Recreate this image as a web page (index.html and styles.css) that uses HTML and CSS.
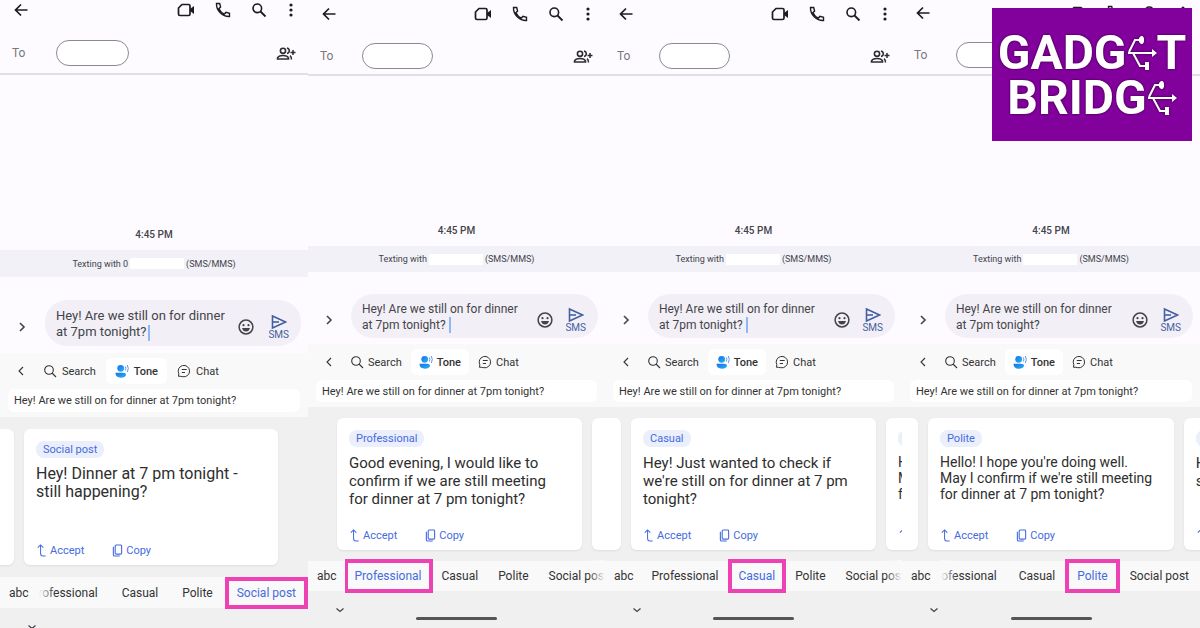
FILE: index.html
```html
<!DOCTYPE html>
<html lang="en">
<head>
    <meta charset="UTF-8">
    <title>Message tone suggestions - Gadget Bridge</title>
    <link rel="stylesheet" href="styles.css">
</head>
<body>
    <svg class="sprite" aria-hidden="true">
        <defs>
            <linearGradient id="toneFill" x1="0" y1="0" x2="1" y2="1">
                <stop offset="0" stop-color="#1a6fe8"/>
                <stop offset="1" stop-color="#27b3f5"/>
            </linearGradient>
        </defs>
        <symbol id="i-back" viewBox="0 0 16 16"><path d="M14.500 8H3M8 2.500L2.500 8L8 13.500" fill="none" stroke="currentColor" stroke-width="1.700"/></symbol>
        <symbol id="i-video" viewBox="0 0 18 16"><path d="M5 2.500H11.500Q13 2.500 13 4V12Q13 13.500 11.500 13.500H3Q1.500 13.500 1.500 12V6Z" fill="none" stroke="currentColor" stroke-width="1.700"/><path d="M13 7L17 4V12L13 9Z" fill="currentColor"/></symbol>
        <symbol id="i-phone" viewBox="0 0 16 16"><path d="M1.500 1.500H4.700L5.600 5L3.900 6.700Q5.800 10.400 9.300 12.100L11 10.400L14.500 11.300V14.500Q9.500 14.800 5.200 10.800Q1.200 6.500 1.500 1.500Z" fill="none" stroke="currentColor" stroke-width="1.400"/></symbol>
        <symbol id="i-search" viewBox="0 0 16 16"><circle cx="6.300" cy="6.300" r="4.300" fill="none" stroke="currentColor" stroke-width="1.600"/><path d="M9.500 9.500L14.500 14.500" stroke="currentColor" stroke-width="1.800"/></symbol>
        <symbol id="i-dots" viewBox="0 0 8 16"><circle cx="4" cy="3" r="1.600"/><circle cx="4" cy="8" r="1.600"/><circle cx="4" cy="13" r="1.600"/></symbol>
        <symbol id="i-group" viewBox="0 0 20 16"><circle cx="7" cy="4.800" r="2.600" fill="none" stroke="currentColor" stroke-width="1.600"/><path d="M1.500 13V12Q2.500 9.500 7 9.500T12.500 12V13Z" fill="none" stroke="currentColor" stroke-width="1.600"/><path d="M11 2Q13.300 2.600 13.300 4.800T11 7.600M14 9.700Q15.500 10.800 15.500 13.500M17 4V9M14.500 6.500H19.500" fill="none" stroke="currentColor" stroke-width="1.500"/></symbol>
        <symbol id="i-right" viewBox="0 0 10 10"><path d="M3 1L7 5L3 9" fill="none" stroke="currentColor" stroke-width="1.600"/></symbol>
        <symbol id="i-left" viewBox="0 0 10 10"><path d="M7 1L3 5L7 9" fill="none" stroke="currentColor" stroke-width="1.100"/></symbol>
        <symbol id="i-down" viewBox="0 0 10 10"><path d="M1.500 3.500L5 6.500L8.500 3.500" fill="none" stroke="currentColor" stroke-width="1.300"/></symbol>
        <symbol id="i-smile" viewBox="0 0 16 16"><circle cx="8" cy="8" r="6.900" fill="none" stroke="currentColor" stroke-width="1.500"/><circle cx="5.500" cy="6.200" r="1.100"/><circle cx="10.500" cy="6.200" r="1.100"/><path d="M4 9H12Q11 12.500 8 12.500T4 9Z"/></symbol>
        <symbol id="i-send" viewBox="0 0 16 16"><path d="M1.500 2L14.500 8L1.500 14Z" fill="none" stroke="currentColor" stroke-width="1.600"/><path d="M2 8H8" stroke="currentColor" stroke-width="1.600"/></symbol>
        <symbol id="i-find" viewBox="0 0 14 14"><circle cx="6" cy="6" r="4.300" fill="none" stroke="currentColor" stroke-width="1.100"/><path d="M9 9L13 13" stroke="currentColor" stroke-width="1.100"/></symbol>
        <symbol id="i-tone" viewBox="0 0 14 14"><circle cx="5.700" cy="4.300" r="3.400" fill="url(#toneFill)"/><path d="M0.500 8.800H8Q11 8.800 11 11Q10 13.700 6 13.700Q0.500 13.700 0.500 8.800Z" fill="url(#toneFill)"/><path d="M10.300 2.500Q11.500 4.500 10.300 6.500M12.300 1Q14.300 4.500 12.300 8" fill="none" stroke="#5f93f0"/></symbol>
        <symbol id="i-chat" viewBox="0 0 14 14"><path d="M3.500 12.300H1.500L1.800 9.700A5.700 5.700 0 1 1 5.800 12.700Z" fill="none" stroke="currentColor" stroke-width="1"/><path d="M4.800 5.500H9.700M4.800 8.500H8" stroke="currentColor"/></symbol>
        <symbol id="i-accept" viewBox="0 0 10 14"><path d="M1 4L4 1L7 4M4 1V10Q4 13 6.500 13H9.500" fill="none" stroke="currentColor" stroke-width="1.100"/></symbol>
        <symbol id="i-copy" viewBox="0 0 12 14"><rect x="3.500" y="1" width="7" height="10" rx="1" fill="none" stroke="currentColor" stroke-width="1.200"/><path d="M1.500 3V11.500Q1.500 13 3 13H8.500" fill="none" stroke="currentColor" stroke-width="1.200"/></symbol>
        <symbol id="i-usb" viewBox="0 0 30 36"><path d="M1 18H26M2 17L8 5H13M6 18L13 31H18" fill="none" stroke="currentColor" stroke-width="2"/><path d="M25 14L30 18L25 22Z"/><path d="M12 3L14 1H15.500L17 3V7L15.500 9H14L12 7Z"/><rect x="18" y="27" width="4" height="8"/></symbol>
    </svg>

    <main class="shots">
        <section class="phone phone-large">
            <header class="topbar">
                <button class="icon-btn" aria-label="Back"><svg><use href="#i-back"/></svg></button>
                <div class="topbar-actions">
                    <button class="icon-btn wide" aria-label="Video call"><svg><use href="#i-video"/></svg></button>
                    <button class="icon-btn" aria-label="Call"><svg><use href="#i-phone"/></svg></button>
                    <button class="icon-btn" aria-label="Search"><svg><use href="#i-search"/></svg></button>
                    <button class="icon-btn slim" aria-label="More"><svg><use href="#i-dots"/></svg></button>
                </div>
            </header>
            <div class="to-row">
                <label for="to1">To</label>
                <input class="recipient" id="to1" type="text">
                <button class="icon-btn group" aria-label="Add people"><svg><use href="#i-group"/></svg></button>
            </div>
            <div class="thread"><time>4:45 PM</time></div>
            <p class="texting">Texting with 0<span class="redacted"></span>(SMS/MMS)</p>
            <div class="compose">
                <button class="expand" aria-label="Expand"><svg><use href="#i-right"/></svg></button>
                <div class="bubble">
                    <textarea rows="2" aria-label="Message">Hey! Are we still on for dinner at 7pm tonight?</textarea>
                    <span class="caret"></span>
                    <button class="icon-btn smile" aria-label="Emoji"><svg><use href="#i-smile"/></svg></button>
                    <button class="send"><svg><use href="#i-send"/></svg>SMS</button>
                </div>
            </div>
            <div class="keyboard">
                <nav class="tools">
                    <button class="collapse" aria-label="Back"><svg><use href="#i-left"/></svg></button>
                    <button class="tool"><svg><use href="#i-find"/></svg>Search</button>
                    <button class="tool selected"><svg><use href="#i-tone"/></svg>Tone</button>
                    <button class="tool"><svg><use href="#i-chat"/></svg>Chat</button>
                </nav>
                <input class="source" type="text" aria-label="Text to rewrite" value="Hey! Are we still on for dinner at 7pm tonight?">
            </div>
            <div class="cards">
                <article class="card previous"></article>
                <article class="card">
                    <span class="tag">Social post</span>
                    <p>Hey! Dinner at 7 pm tonight - still happening?</p>
                    <div class="card-actions">
                        <button><svg><use href="#i-accept"/></svg>Accept</button>
                        <button><svg><use href="#i-copy"/></svg>Copy</button>
                    </div>
                </article>
            </div>
            <div class="tones">
                <button class="abc">abc</button>
                <div class="tone-list scrolled">
                    <button>Professional</button>
                    <button>Casual</button>
                    <button>Polite</button>
                    <button class="current">Social post</button>
                </div>
            </div>
            <footer class="navbar">
                <button class="hide" aria-label="Hide keyboard"><svg><use href="#i-down"/></svg></button>
            </footer>
        </section>

        <section class="phone">
            <header class="topbar">
                <button class="icon-btn" aria-label="Back"><svg><use href="#i-back"/></svg></button>
                <div class="topbar-actions">
                    <button class="icon-btn wide" aria-label="Video call"><svg><use href="#i-video"/></svg></button>
                    <button class="icon-btn" aria-label="Call"><svg><use href="#i-phone"/></svg></button>
                    <button class="icon-btn" aria-label="Search"><svg><use href="#i-search"/></svg></button>
                    <button class="icon-btn slim" aria-label="More"><svg><use href="#i-dots"/></svg></button>
                </div>
            </header>
            <div class="to-row">
                <label for="to2">To</label>
                <input class="recipient" id="to2" type="text">
                <button class="icon-btn group" aria-label="Add people"><svg><use href="#i-group"/></svg></button>
            </div>
            <div class="thread"><time>4:45 PM</time></div>
            <p class="texting">Texting with<span class="redacted"></span>(SMS/MMS)</p>
            <div class="compose">
                <button class="expand" aria-label="Expand"><svg><use href="#i-right"/></svg></button>
                <div class="bubble">
                    <textarea rows="2" aria-label="Message">Hey! Are we still on for dinner at 7pm tonight?</textarea>
                    <span class="caret"></span>
                    <button class="icon-btn smile" aria-label="Emoji"><svg><use href="#i-smile"/></svg></button>
                    <button class="send"><svg><use href="#i-send"/></svg>SMS</button>
                </div>
            </div>
            <div class="keyboard">
                <nav class="tools">
                    <button class="collapse" aria-label="Back"><svg><use href="#i-left"/></svg></button>
                    <button class="tool"><svg><use href="#i-find"/></svg>Search</button>
                    <button class="tool selected"><svg><use href="#i-tone"/></svg>Tone</button>
                    <button class="tool"><svg><use href="#i-chat"/></svg>Chat</button>
                </nav>
                <input class="source" type="text" aria-label="Text to rewrite" value="Hey! Are we still on for dinner at 7pm tonight?">
            </div>
            <div class="cards first">
                <article class="card">
                    <span class="tag">Professional</span>
                    <p>Good evening, I would like to confirm if we are still meeting for dinner at 7 pm tonight?</p>
                    <div class="card-actions">
                        <button><svg><use href="#i-accept"/></svg>Accept</button>
                        <button><svg><use href="#i-copy"/></svg>Copy</button>
                    </div>
                </article>
                <article class="card"></article>
            </div>
            <div class="tones">
                <button class="abc">abc</button>
                <div class="tone-list">
                    <button class="current">Professional</button>
                    <button>Casual</button>
                    <button>Polite</button>
                    <button>Social post</button>
                </div>
            </div>
            <footer class="navbar">
                <button class="hide" aria-label="Hide keyboard"><svg><use href="#i-down"/></svg></button>
                <span class="home"></span>
            </footer>
        </section>

        <section class="phone">
            <header class="topbar">
                <button class="icon-btn" aria-label="Back"><svg><use href="#i-back"/></svg></button>
                <div class="topbar-actions">
                    <button class="icon-btn wide" aria-label="Video call"><svg><use href="#i-video"/></svg></button>
                    <button class="icon-btn" aria-label="Call"><svg><use href="#i-phone"/></svg></button>
                    <button class="icon-btn" aria-label="Search"><svg><use href="#i-search"/></svg></button>
                    <button class="icon-btn slim" aria-label="More"><svg><use href="#i-dots"/></svg></button>
                </div>
            </header>
            <div class="to-row">
                <label for="to3">To</label>
                <input class="recipient" id="to3" type="text">
                <button class="icon-btn group" aria-label="Add people"><svg><use href="#i-group"/></svg></button>
            </div>
            <div class="thread"><time>4:45 PM</time></div>
            <p class="texting">Texting with<span class="redacted"></span>(SMS/MMS)</p>
            <div class="compose">
                <button class="expand" aria-label="Expand"><svg><use href="#i-right"/></svg></button>
                <div class="bubble">
                    <textarea rows="2" aria-label="Message">Hey! Are we still on for dinner at 7pm tonight?</textarea>
                    <span class="caret"></span>
                    <button class="icon-btn smile" aria-label="Emoji"><svg><use href="#i-smile"/></svg></button>
                    <button class="send"><svg><use href="#i-send"/></svg>SMS</button>
                </div>
            </div>
            <div class="keyboard">
                <nav class="tools">
                    <button class="collapse" aria-label="Back"><svg><use href="#i-left"/></svg></button>
                    <button class="tool"><svg><use href="#i-find"/></svg>Search</button>
                    <button class="tool selected"><svg><use href="#i-tone"/></svg>Tone</button>
                    <button class="tool"><svg><use href="#i-chat"/></svg>Chat</button>
                </nav>
                <input class="source" type="text" aria-label="Text to rewrite" value="Hey! Are we still on for dinner at 7pm tonight?">
            </div>
            <div class="cards">
                <article class="card previous"></article>
                <article class="card">
                    <span class="tag">Casual</span>
                    <p>Hey! Just wanted to check if we're still on for dinner at 7 pm tonight?</p>
                    <div class="card-actions">
                        <button><svg><use href="#i-accept"/></svg>Accept</button>
                        <button><svg><use href="#i-copy"/></svg>Copy</button>
                    </div>
                </article>
                <article class="card small-text">
                    <span class="tag">Polite</span>
                    <p>Hello! I hope you're doing well. May I confirm if we're still meeting for dinner at 7 pm tonight?</p>
                    <div class="card-actions">
                        <button><svg><use href="#i-accept"/></svg>Accept</button>
                    </div>
                </article>
            </div>
            <div class="tones">
                <button class="abc">abc</button>
                <div class="tone-list">
                    <button>Professional</button>
                    <button class="current">Casual</button>
                    <button>Polite</button>
                    <button>Social post</button>
                </div>
            </div>
            <footer class="navbar">
                <button class="hide" aria-label="Hide keyboard"><svg><use href="#i-down"/></svg></button>
                <span class="home"></span>
            </footer>
        </section>

        <section class="phone phone-last">
            <header class="topbar">
                <button class="icon-btn" aria-label="Back"><svg><use href="#i-back"/></svg></button>
                <div class="topbar-actions">
                    <button class="icon-btn wide" aria-label="Video call"><svg><use href="#i-video"/></svg></button>
                    <button class="icon-btn" aria-label="Call"><svg><use href="#i-phone"/></svg></button>
                    <button class="icon-btn" aria-label="Search"><svg><use href="#i-search"/></svg></button>
                    <button class="icon-btn slim" aria-label="More"><svg><use href="#i-dots"/></svg></button>
                </div>
            </header>
            <div class="to-row">
                <label for="to4">To</label>
                <input class="recipient" id="to4" type="text">
            </div>
            <div class="thread"><time>4:45 PM</time></div>
            <p class="texting">Texting with<span class="redacted"></span>(SMS/MMS)</p>
            <div class="compose">
                <button class="expand" aria-label="Expand"><svg><use href="#i-right"/></svg></button>
                <div class="bubble">
                    <textarea rows="2" aria-label="Message">Hey! Are we still on for dinner at 7pm tonight?</textarea>
                    <button class="icon-btn smile" aria-label="Emoji"><svg><use href="#i-smile"/></svg></button>
                    <button class="send"><svg><use href="#i-send"/></svg>SMS</button>
                </div>
            </div>
            <div class="keyboard">
                <nav class="tools">
                    <button class="collapse" aria-label="Back"><svg><use href="#i-left"/></svg></button>
                    <button class="tool"><svg><use href="#i-find"/></svg>Search</button>
                    <button class="tool selected"><svg><use href="#i-tone"/></svg>Tone</button>
                    <button class="tool"><svg><use href="#i-chat"/></svg>Chat</button>
                </nav>
                <input class="source" type="text" aria-label="Text to rewrite" value="Hey! Are we still on for dinner at 7pm tonight?">
            </div>
            <div class="cards">
                <article class="card previous"></article>
                <article class="card small-text">
                    <span class="tag">Polite</span>
                    <p>Hello! I hope you're doing well. May I confirm if we're still meeting for dinner at 7 pm tonight?</p>
                    <div class="card-actions">
                        <button><svg><use href="#i-accept"/></svg>Accept</button>
                        <button><svg><use href="#i-copy"/></svg>Copy</button>
                    </div>
                </article>
                <article class="card">
                    <span class="tag">Social post</span>
                    <p>Hey! Dinner at 7 pm tonight - still happening?</p>
                    <div class="card-actions">
                        <button><svg><use href="#i-accept"/></svg>Accept</button>
                    </div>
                </article>
            </div>
            <div class="tones">
                <button class="abc">abc</button>
                <div class="tone-list scrolled">
                    <button>Professional</button>
                    <button>Casual</button>
                    <button class="current">Polite</button>
                    <button>Social post</button>
                </div>
            </div>
            <footer class="navbar">
                <button class="hide" aria-label="Hide keyboard"><svg><use href="#i-down"/></svg></button>
                <span class="home"></span>
            </footer>
        </section>
    </main>

    <div class="logo" role="img" aria-label="Gadget Bridge">
        <div class="logo-line">GADG<svg><use href="#i-usb"/></svg>T</div>
        <div class="logo-line">BRIDG<svg><use href="#i-usb"/></svg></div>
    </div>
</body>
</html>
```
FILE: styles.css
```css
* {
    box-sizing: border-box;
}

body {
    margin: 0;
    font-family: Roboto, "Liberation Sans", sans-serif;
    font-size: 12px;
    color: #44444a;
    background-color: #fdfbff;
}

p {
    margin: 0;
}

button,
input,
textarea {
    font: inherit;
    color: inherit;
    border: none;
    background: none;
    padding: 0;
    margin: 0;
}

button {
    cursor: pointer;
    white-space: nowrap;
}

svg {
    display: block;
    fill: currentColor;
}

.sprite {
    position: absolute;
    width: 0;
    height: 0;
}

.shots {
    display: grid;
    grid-template-columns: 308fr 297fr 297fr 298fr;
    min-height: 100vh;
}

.phone {
    display: flex;
    flex-direction: column;
    min-width: 0;
    overflow: hidden;
}

/* top bar */
.topbar {
    display: flex;
    align-items: center;
    justify-content: space-between;
    height: 28px;
    padding: 0 13px;
    color: #1c1c20;
}

.topbar-actions {
    display: flex;
    gap: 20px;
}

.icon-btn,
.icon-btn svg {
    width: 16px;
    height: 16px;
}

.wide,
.wide svg {
    width: 18px;
}

.slim,
.slim svg {
    width: 8px;
}

.group,
.group svg {
    width: 20px;
}

.to-row {
    display: flex;
    align-items: center;
    padding: 15px 12px 5px;
    border-bottom: 2px solid #e1dfe4;
    color: #77777c;
}

.to-row label {
    width: 42px;
}

.recipient {
    width: 71px;
    height: 26px;
    border: 1px solid #8a8a90;
    border-radius: 13px;
    background-color: #fff;
}

.group {
    margin: 2px 0 0 auto;
    color: #2c2c30;
}

/* conversation */
.thread {
    flex: 1;
    display: flex;
    align-items: flex-end;
    justify-content: center;
    padding-bottom: 8px;
    font-size: 10px;
    font-weight: 500;
    line-height: 14px;
}

.texting {
    display: flex;
    align-items: center;
    justify-content: center;
    height: 26px;
    background-color: #f2f1f8;
    font-size: 9px;
}

.redacted {
    width: 54px;
    height: 11px;
    margin: 0 2px;
    background-color: #fff;
}

.compose {
    display: flex;
    align-items: center;
    gap: 17px;
    padding: 22px 7px 6px 16px;
}

.expand svg,
.collapse svg,
.hide svg {
    width: 10px;
    height: 10px;
}

.expand {
    margin-top: 8px;
}

.bubble {
    position: relative;
    flex: 1;
    display: flex;
    align-items: center;
    min-width: 0;
    height: 44px;
    padding: 0 12px 0 11px;
    border-radius: 22px;
    background-color: #f2f0f6;
}

.bubble textarea {
    flex: 1;
    min-width: 0;
    height: 32px;
    margin-top: 2px;
    line-height: 16px;
    resize: none;
    outline: none;
    overflow: hidden;
}

.caret {
    position: absolute;
    left: 98px;
    bottom: 5px;
    width: 2px;
    height: 16px;
    background-color: #8db8f5;
}

.smile {
    margin: 8px 12px 0 8px;
}

.send {
    display: flex;
    flex-direction: column;
    align-items: center;
    margin-top: 6px;
    color: #4560a0;
    font-size: 10px;
    line-height: 9px;
}

.send svg {
    width: 16px;
    height: 16px;
}

/* keyboard panel */
.keyboard {
    padding: 0 8px 5px;
    background-color: #f9f9f9;
    color: #333;
}

.tools {
    display: flex;
    align-items: center;
    height: 36px;
    padding-left: 8px;
    font-size: 11px;
}

.collapse {
    margin-right: 8px;
}

.tool {
    display: flex;
    align-items: center;
    gap: 4px;
    height: 26px;
    padding: 0 8px;
    border-radius: 6px;
}

.tool svg {
    width: 14px;
    height: 14px;
}

.selected {
    margin: 0 1px;
    background-color: #fff;
    font-weight: 500;
}

.source {
    display: block;
    width: 100%;
    height: 22px;
    padding: 0 6px;
    border-radius: 6px;
    background-color: #fff;
    font-size: 11px;
}

/* suggestion cards */
.cards {
    display: flex;
    gap: 10px;
    padding: 11px 0;
    background-color: #f0f0f0;
}

.first {
    padding-left: 29px;
}

.card {
    display: flex;
    flex-direction: column;
    align-items: flex-start;
    flex: 0 0 82.5%;
    height: 132px;
    padding: 12px 12px 8px;
    border-radius: 6px;
    background-color: #fff;
    box-shadow: 0 1px 2px #ddd;
}

.first .card {
    flex-basis: 245px;
}

.previous {
    flex-basis: 16px;
    padding: 0;
    border-radius: 0 6px 6px 0;
}

.tag {
    padding: 0 7px;
    border-radius: 8px;
    background-color: #ebeffc;
    color: #456be0;
    font-size: 11px;
    line-height: 17px;
}

.card p {
    margin-top: 7px;
    padding-right: 12px;
    color: #2e2e2e;
    font-size: 15px;
    line-height: 18px;
}

.card.small-text p {
    padding-right: 5px;
    font-size: 14px;
    line-height: 16px;
}

.card-actions {
    display: flex;
    gap: 28px;
    margin-top: auto;
    color: #456be0;
}

.card-actions button {
    display: flex;
    align-items: center;
    gap: 3px;
    height: 14px;
    font-size: 11px;
}

.card-actions svg {
    width: 11px;
    height: 13px;
}

/* tone strip */
.tones {
    display: flex;
    align-items: center;
    height: 30px;
    background-color: #f9f9f9;
    color: #333;
}

.abc {
    padding: 0 0 0 9px;
}

.tone-list {
    position: relative;
    flex: 1;
    display: flex;
    min-width: 0;
    margin-left: 8px;
    overflow-x: clip;
}

.tone-list::after {
    content: "";
    position: absolute;
    top: 0;
    right: 0;
    width: 16px;
    height: 28px;
    background: linear-gradient(to right, rgba(249, 249, 249, 0), #f9f9f9);
}

.tone-list button {
    flex: none;
    height: 32px;
    padding: 0 10px;
}

.scrolled {
    justify-content: flex-end;
    margin-left: 10px;
}

.scrolled::after {
    right: auto;
    left: 0;
    background: linear-gradient(to left, rgba(249, 249, 249, 0), #f9f9f9);
}

.scrolled button {
    padding: 0 11px;
}

.current {
    outline: 4px solid #ee41b4;
    outline-offset: -3px;
    color: #456be0;
}

.navbar {
    display: grid;
    grid-template-columns: 1fr auto 1fr;
    height: 37px;
    background-color: #f0f0f0;
}

.hide {
    justify-self: start;
    align-self: start;
    padding: 14px 0 0 27px;
}

.home {
    width: 81px;
    height: 3px;
    margin-top: 26px;
    border-radius: 2px;
    background-color: #555;
}

/* first shot is a little larger than the others */
.phone-large .topbar {
    height: 20px;
}

.phone-large .to-row {
    padding: 20px 12px 7px;
}

.phone-large .to-row label {
    width: 44px;
}

.phone-large .recipient {
    width: 73px;
}

.phone-large .texting {
    height: 27px;
}

.phone-large .compose {
    padding: 23px 7px 7px 17px;
    gap: 18px;
}

.phone-large .bubble {
    height: 46px;
}

.phone-large textarea {
    font-size: 13px;
}

.phone-large .caret {
    left: 103px;
}

.phone-large .smile {
    margin: 8px 14px 0 4px;
}

.phone-large .tool {
    gap: 5px;
    padding: 0 9px;
}

.phone-large .source {
    height: 23px;
}

.phone-large .cards {
    padding: 12px 0;
}

.phone-large .card {
    height: 136px;
}

.phone-large .card p {
    font-size: 16px;
}

.phone-large .previous {
    flex-basis: 14px;
}

.phone-large .tones {
    height: 31px;
}

.phone-large .tone-list button {
    padding: 0 12px;
}

.phone-large .current {
    outline-offset: -4px;
}

.phone-large .navbar {
    height: 20px;
    overflow: hidden;
}

.phone-last .topbar {
    height: 25px;
}

.phone-last .to-row {
    padding: 17px 12px 6px;
}

/* brand badge over the last shot */
.logo {
    position: absolute;
    top: 8px;
    right: 8px;
    width: 200px;
    height: 133px;
    padding-top: 22px;
    background-color: #82009c;
    color: #fff;
    font-size: 48px;
    font-weight: 700;
    line-height: 45px;
}

.logo-line {
    display: flex;
    align-items: center;
    justify-content: center;
    filter: drop-shadow(0 0 1px #2a0033);
}

.logo-line svg {
    width: 30px;
    height: 36px;
}
```
